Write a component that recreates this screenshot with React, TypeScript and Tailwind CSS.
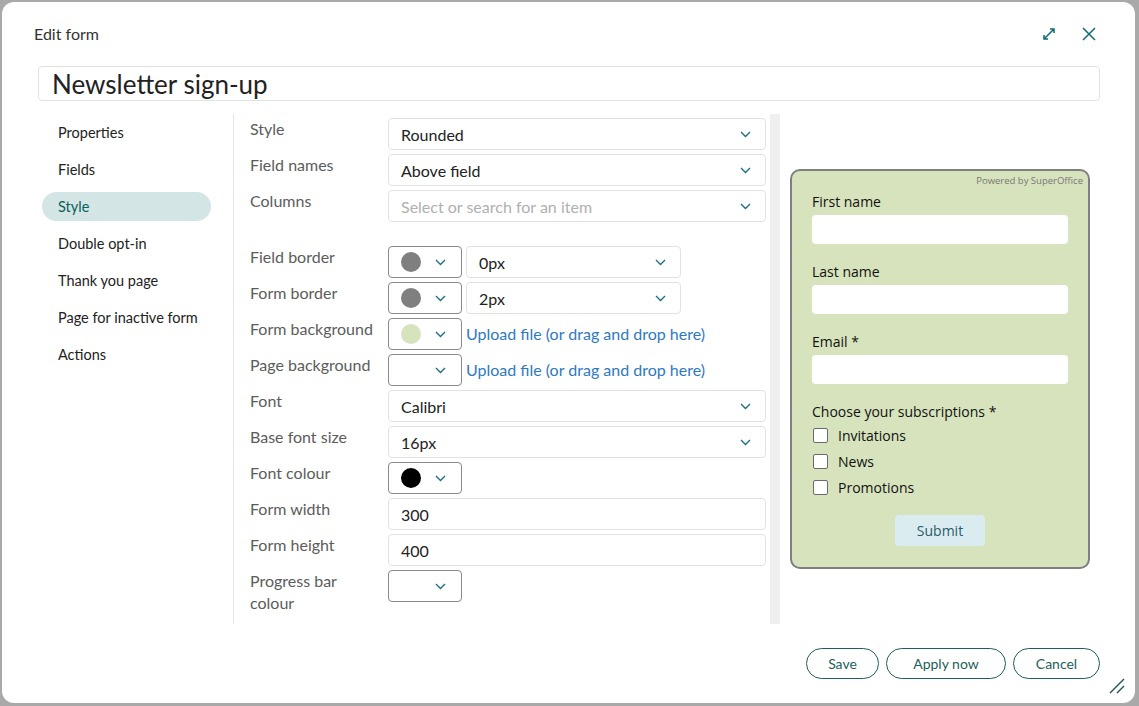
import React from 'react';

const ui = { fontFamily: 'Lato, "Open Sans", sans-serif' };
const calibri = { fontFamily: '"Open Sans", "Liberation Sans", sans-serif' };

function Chevron({ className = '' }: { className?: string }) {
  return (
    <svg width="11" height="7" viewBox="0 0 11 7" className={className}>
      <path d="M1 1l4.5 4.5L10 1" fill="none" stroke="#1a6b85" strokeWidth="1.3" />
    </svg>
  );
}

function Select({ value, placeholder }: { value?: string; placeholder?: string }) {
  return (
    <div className="flex h-[32px] flex-1 items-center justify-between rounded-[4px] border border-[#e2e2e2] pl-[12px] pr-[14px]">
      {value ? (
        <span className="pt-[1px] text-[16px] text-[#222]">{value}</span>
      ) : (
        <span className="pt-[1px] text-[16px] text-[#b0b0b0]">{placeholder}</span>
      )}
      <Chevron />
    </div>
  );
}

function ColorPick({ color }: { color?: string }) {
  return (
    <div className="flex h-[32px] w-[74px] shrink-0 items-center rounded-[4px] border border-[#8a8a8a] pl-[12px]">
      <span
        className="h-[20px] w-[20px] rounded-full"
        style={{ background: color ?? 'transparent' }}
      />
      <Chevron className="ml-[14px]" />
    </div>
  );
}

function TextBox({ value }: { value: string }) {
  return (
    <div className="flex h-[32px] flex-1 items-center rounded-[4px] border border-[#e2e2e2] pl-[12px]">
      <span className="pt-[1px] text-[16px] text-[#222]">{value}</span>
    </div>
  );
}

function Row({ label, children, className = '' }: { label: string; children: React.ReactNode; className?: string }) {
  return (
    <div className={`flex min-h-[32px] ${className}`}>
      <div className="w-[138px] shrink-0 pr-[8px] text-[16px] leading-[22px] text-[#5c5c5c]">{label}</div>
      <div className="flex flex-1 gap-[4px]">{children}</div>
    </div>
  );
}

function UploadLink() {
  return (
    <span className="flex items-center text-[16px] text-[#2f79c2]">Upload file (or drag and drop here)</span>
  );
}

const navItems = ['Properties', 'Fields', 'Style', 'Double opt-in', 'Thank you page', 'Page for inactive form', 'Actions'];

function PreviewField({ label }: { label: string }) {
  return (
    <div className="mb-[18px]">
      <div className="text-[14px] leading-[20px] text-[#111]">{label}</div>
      <div className="mt-[3px] h-[29px] rounded-[4px] bg-white" />
    </div>
  );
}

function Preview() {
  return (
    <div
      className="flex h-[400px] w-[300px] flex-col rounded-[10px] border-2 border-[#7f7f7f] bg-[#d7e3bd] px-[20px]"
      style={calibri}
    >
      <div className="-mr-[15px] mt-[4px] text-right text-[9.5px] leading-[12px] text-[#777]">Powered by SuperOffice</div>
      <div className="mt-[5px]">
        <PreviewField label="First name" />
        <PreviewField label="Last name" />
        <PreviewField label="Email *" />
        <div className="text-[14px] leading-[20px] text-[#111]">Choose your subscriptions *</div>
        <div className="mt-[3px] flex flex-col gap-[6px]">
          {['Invitations', 'News', 'Promotions'].map((c) => (
            <label key={c} className="flex h-[20px] items-center gap-[10px] text-[14px] text-[#111]">
              <span className="ml-[1px] h-[15px] w-[15px] rounded-[2px] border border-[#6a6a6a] bg-white" />
              {c}
            </label>
          ))}
        </div>
        <div className="mt-[18px] flex justify-center">
          <div className="flex h-[31px] w-[90px] items-center justify-center rounded-[4px] bg-[#dbecf0] text-[14px] text-[#2a5a6c]">
            Submit
          </div>
        </div>
      </div>
    </div>
  );
}

export default function App() {
  return (
    <div className="h-[706px] w-[1139px] bg-[#a9a9a9] pb-[3px] pl-[2px] pr-[4px] pt-[2px]" style={ui}>
      <div className="relative flex h-full flex-col rounded-[12px] bg-white">
        {/* header */}
        <div className="flex h-[64px] items-center justify-between pl-[32px] pr-[39px]">
          <span className="text-[16px] text-[#333]">Edit form</span>
          <div className="flex items-center gap-[26px]">
            <svg width="14" height="14" viewBox="0 0 14 14">
              <path d="M2 12L12 2M8 2H12v4M2 8V12h4" fill="none" stroke="#0e6b78" strokeWidth="1.5" />
            </svg>
            <svg width="14" height="14" viewBox="0 0 14 14">
              <path d="M1 1l12 12M13 1L1 13" fill="none" stroke="#0e6b78" strokeWidth="1.5" />
            </svg>
          </div>
        </div>

        {/* title */}
        <div className="ml-[36px] mr-[35px] flex h-[35px] items-center rounded-[4px] border border-[#e2e2e2] pl-[13px]">
          <span className="text-[26px] leading-none text-[#222]">Newsletter sign-up</span>
        </div>

        {/* body */}
        <div className="ml-[36px] mr-[35px] mt-[13px] flex h-[510px]">
          <nav className="flex w-[196px] shrink-0 flex-col gap-[8px] border-r border-[#e4e4e4] pl-[4px] pr-[22px] pt-[4px]">
            {navItems.map((n) => (
              <div
                key={n}
                className={`flex h-[29px] items-center rounded-full pl-[16px] text-[14.5px] ${
                  n === 'Style' ? 'bg-[#d3e5e4] text-[#0f5f5c]' : 'text-[#222]'
                }`}
              >
                {n}
              </div>
            ))}
          </nav>

          <div className="flex w-[536px] shrink-0 flex-col gap-[4px] pl-[16px] pr-[4px] pt-[4px]">
            <Row label="Style"><Select value="Rounded" /></Row>
            <Row label="Field names"><Select value="Above field" /></Row>
            <Row label="Columns"><Select placeholder="Select or search for an item" /></Row>
            <Row label="Field border" className="mt-[20px]">
              <ColorPick color="#7f7f7f" />
              <div className="flex w-[215px]"><Select value="0px" /></div>
            </Row>
            <Row label="Form border">
              <ColorPick color="#7f7f7f" />
              <div className="flex w-[215px]"><Select value="2px" /></div>
            </Row>
            <Row label="Form background">
              <ColorPick color="#d7e3bd" />
              <UploadLink />
            </Row>
            <Row label="Page background">
              <ColorPick />
              <UploadLink />
            </Row>
            <Row label="Font"><Select value="Calibri" /></Row>
            <Row label="Base font size"><Select value="16px" /></Row>
            <Row label="Font colour"><ColorPick color="#000" /></Row>
            <Row label="Form width"><TextBox value="300" /></Row>
            <Row label="Form height"><TextBox value="400" /></Row>
            <Row label="Progress bar colour"><ColorPick /></Row>
          </div>

          <div className="w-[10px] shrink-0 bg-[#eef0ef]" />

          <div className="flex flex-1 justify-center pt-[55px]">
            <Preview />
          </div>
        </div>

        {/* footer */}
        <div className="mr-[35px] mt-[24px] flex justify-end gap-[7px]">
          {[
            ['Save', 'w-[73px]'],
            ['Apply now', 'w-[120px]'],
            ['Cancel', 'w-[87px]'],
          ].map(([t, w]) => (
            <button
              key={t}
              className={`flex h-[31px] ${w} items-center justify-center rounded-full border border-[#1c5f5c] text-[14px] text-[#1c5f5c]`}
            >
              {t}
            </button>
          ))}
        </div>

        <svg className="absolute bottom-[9px] right-[10px]" width="16" height="16" viewBox="0 0 16 16">
          <path d="M1 15L15 1M8 15L15 8" fill="none" stroke="#1c4f5c" strokeWidth="1.4" />
        </svg>
      </div>
    </div>
  );
}
